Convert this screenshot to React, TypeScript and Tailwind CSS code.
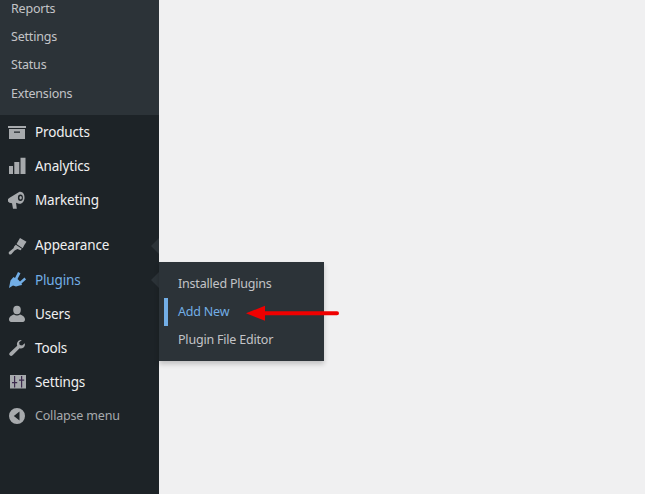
function Archive() {
  return (
    <svg width="20" height="20" viewBox="0 0 20 20" fill="#a7aaad">
      <path d="M1 4h18v2H1z" />
      <path d="M2 7h16v10H2zM7 9.500v1.200h6V9.500z" fillRule="evenodd" />
    </svg>
  );
}
function Chart() {
  return (
    <svg width="20" height="20" viewBox="0 0 20 20" fill="#a7aaad">
      <path d="M2 10h4v8H2zM7.300 6h5v12h-5zM13.500 1.700h5V18h-5z" />
    </svg>
  );
}
function Megaphone() {
  return (
    <svg width="20" height="20" viewBox="0 0 20 20" fill="#a7aaad">
      <path d="M1 9l2-1.500L12.500 1.800c3-.6 5.300 2.400 5 6.200-.3 3.500-2.500 6.500-5.500 5.700L9 12.800l.8 6H6l-1-5.500-2.500-.5L1 11.500z" />
      <ellipse cx="13.400" cy="7.800" rx="2.500" ry="3.300" fill="#1d2327" />
      <ellipse cx="13.600" cy="7.800" rx="1.200" ry="1.800" />
    </svg>
  );
}
function Brush() {
  return (
    <svg width="20" height="20" viewBox="0 0 20 20" fill="#a7aaad">
      <path d="M13 2l6.500 3.800-2 3-1.800 3.400L9.500 8z" />
      <path d="M8.800 8.800l6 4-1.200 1.500-3.200-1.400-2.800 1.700-3.300 3.600c-.8.500-1.800.4-2.300-.3-.5-.7-.4-1.500.2-2.100l4.300-3.600.8-2z" />
    </svg>
  );
}
function Plug() {
  return (
    <svg width="20" height="20" viewBox="0 0 20 20" fill="#72aee6">
      <path d="M2 18L3.500 10.500 6.500 7 8 8 11 2 13.500 3.200 10.500 9 13 11.500 17.500 7.500 19 9.500 14.500 13.500 15 15 12.500 15.500 9 16.500 6 15.500z" />
    </svg>
  );
}
function User() {
  return (
    <svg width="20" height="20" viewBox="0 0 20 20" fill="#a7aaad">
      <ellipse cx="10" cy="6" rx="3.800" ry="4.200" />
      <path d="M2 15.500c0-2.500 2.500-4.500 5-5 1.500 1.200 4.500 1.200 6 0 2.500.5 5 2.500 5 5 0 1.500-1 2.500-2 2.500H4c-1 0-2-1-2-2.500z" />
    </svg>
  );
}
function Wrench() {
  return (
    <svg width="20" height="20" viewBox="0 0 20 20" fill="#a7aaad">
      <path d="M14.800 2c-2.300-.3-4.300 1-4.800 3.200-.2.900-.1 1.700.2 2.500l-7.200 6.700c-1 .9-1 2-.2 2.900.8.800 1.900.8 2.800-.1l7-7c2.200.7 4.600-.5 5.200-2.800.2-.8.200-1.500 0-2.200l-2.700 2.400-2.400-.6-.6-2.400z" />
    </svg>
  );
}
function Sliders() {
  return (
    <svg width="20" height="20" viewBox="0 0 20 20">
      <path fill="#a7aaad" d="M3 3h16v13.500H3z" />
      <path fill="#3d2b4e" d="M7 4h1.200v11.500H7zM5 10h5.200v1.200H5zM14 4h1.200v11.500H14zM12 7.500h5.200v1.200H12z" />
    </svg>
  );
}
function Collapse() {
  return (
    <svg width="20" height="20" viewBox="0 0 20 20" fill="#a7aaad">
      <path fillRule="evenodd" d="M10 2a8 8 0 1 1 0 16 8 8 0 0 1 0-16zM12.500 5.500L6.800 10l5.700 4.500z" />
    </svg>
  );
}

function MenuRow({ icon, label, active, muted, notch, tall }: { icon: React.ReactNode; label: string; active?: boolean; muted?: boolean; notch?: boolean; tall?: boolean }) {
  return (
    <div className={tall ? "relative flex h-[35px] items-center" : "relative flex h-[34px] items-center"}>
      <div className="flex w-[35px] justify-center pr-[1px]">{icon}</div>
      <span className={muted ? "text-[12.500px] tracking-[-0.18px] text-[#a7aaad]" : active ? "text-[13.500px] tracking-[-0.15px] text-[#72aee6]" : "text-[13.500px] tracking-[-0.15px] text-[#f0f0f1]"}>{label}</span>
      {notch ? (
        <span className="absolute right-0 top-1/2 -mt-[8px] h-0 w-0 border-y-[8px] border-r-[8px] border-y-transparent border-r-[#2c3338]" />
      ) : null}
    </div>
  );
}

export default function App() {
  return (
    <div className="relative flex h-[494px] w-[645px] overflow-hidden bg-[#f0f0f1] font-['Noto_Sans','Open_Sans',sans-serif]">
      <aside className="flex h-full w-[159px] shrink-0 flex-col bg-[#1d2327]">
        <div className="flex h-[115px] shrink-0 flex-col gap-[12.300px] bg-[#2c3338] pl-[11px] pt-[1px] text-[12.500px] tracking-[-0.2px] text-[#c3c4c7]">
          <div className="flex h-[16px] items-center">Reports</div>
          <div className="flex h-[16px] items-center">Settings</div>
          <div className="flex h-[16px] items-center">Status</div>
          <div className="flex h-[16px] items-center">Extensions</div>
        </div>
        <div className="flex flex-col">
          <MenuRow icon={<Archive />} label="Products" />
          <MenuRow icon={<Chart />} label="Analytics" />
          <MenuRow icon={<Megaphone />} label="Marketing" />
          <div className="h-[11px]" />
          <MenuRow icon={<Brush />} label="Appearance" notch tall />
          <MenuRow icon={<Plug />} label="Plugins" active notch />
          <MenuRow icon={<User />} label="Users" />
          <MenuRow icon={<Wrench />} label="Tools" />
          <MenuRow icon={<Sliders />} label="Settings" />
          <MenuRow icon={<Collapse />} label="Collapse menu" muted />
        </div>
      </aside>

      <div className="absolute left-[159px] top-[262px] flex h-[99px] w-[165px] flex-col justify-center bg-[#2c3338] pl-[19px] pt-[2px] text-[12.500px] tracking-[-0.2px] text-[#c3c4c7] shadow-[0_3px_5px_rgba(0,0,0,0.2)]">
        <div className="flex h-[28px] items-center">Installed Plugins</div>
        <div className="relative flex h-[28px] items-center text-[#72aee6]">
          <span className="absolute -left-[14px] -top-[1px] h-full w-[4px] bg-[#72aee6]" />
          Add New
        </div>
        <div className="flex h-[28px] items-center">Plugin File Editor</div>
      </div>

      <svg className="absolute left-[245px] top-[303px]" width="95" height="20" viewBox="0 0 95 20">
        <path d="M1 10.300 L20 2.800 V8.300 H92 a2 2 0 0 1 0 4 H20 V17.800 Z" fill="#f00000" />
      </svg>
    </div>
  );
}
